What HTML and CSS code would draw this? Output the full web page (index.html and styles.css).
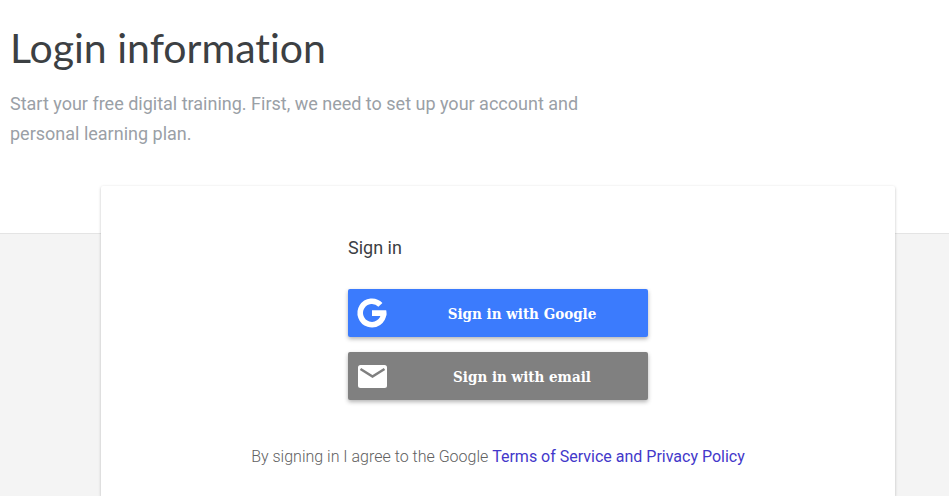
FILE: index.html
```html
<!DOCTYPE html>
<html lang="en">
<head>
    <meta charset="UTF-8">
    <meta name="viewport" content="width=device-width, initial-scale=1">
    <title>Login information</title>

    <link rel="stylesheet" href="styles.css">
</head>
<body>

<header class="intro">
    <h1 class="intro-title">Login information</h1>
    <p class="intro-text">Start your free digital training. First, we need to set up your account and personal learning plan.</p>
</header>

<main class="content">
    <section class="card">
        <div class="sign-in">
            <h2 class="sign-in-title">Sign in</h2>
            <button type="button" class="btn btn-google">
                <svg class="btn-icon" viewBox="0 0 48 48" aria-hidden="true">
                    <path fill="none" stroke="#fff" stroke-width="5.6" d="M32.400 15.900A11.700 11.700 0 1 0 35.600 24.600"/>
                    <path fill="#fff" d="M24 21.300h14.200c.2 1 .3 1.900.3 3l-.3 2.600H24z"/>
                </svg>
                <span class="btn-label">Sign in with Google</span>
            </button>
            <button type="button" class="btn btn-email">
                <svg class="btn-icon" viewBox="0 0 48 48" aria-hidden="true">
                    <rect x="10" y="13" width="29" height="23" rx="2.500" fill="#fff"/>
                    <path fill="none" stroke="#808080" stroke-width="2.600" d="M12.500 17l12 7.500 12-7.500"/>
                </svg>
                <span class="btn-label">Sign in with email</span>
            </button>
        </div>
        <p class="terms">By signing in I agree to the Google <a href="#terms">Terms of Service and Privacy Policy</a></p>
    </section>
</main>

</body>
</html>
```
FILE: styles.css
```css
* {
    box-sizing: border-box;
}

body {
    margin: 0;
    min-height: 100vh;
    display: flex;
    flex-direction: column;
    font-family: Roboto, sans-serif;
    background-color: #f4f4f4;
}

.intro {
    padding: 24px 10px 84px;
    background-color: #fff;
    border-bottom: 1px solid #e4e4e4;
}

.intro-title {
    margin: 0 0 17px;
    font-family: Lato, sans-serif;
    font-size: 41px;
    font-weight: 400;
    font-variant-ligatures: none;
    line-height: 48px;
    color: #3c4043;
}

.intro-text {
    max-width: 600px;
    margin: 0;
    font-size: 18px;
    line-height: 30px;
    color: #9aa0a6;
}

.content {
    flex: 1;
    display: flex;
    padding: 0 54px 0 101px;
}

.card {
    flex: 1;
    margin-top: -48px;
    padding: 48px 24px 24px;
    background-color: #fff;
    border-radius: 2px 2px 0 0;
    box-shadow: 0 1px 3px rgba(0, 0, 0, 0.25);
}

.sign-in {
    max-width: 300px;
    margin: 0 auto;
}

.sign-in-title {
    margin: 0 0 27px;
    font-size: 18px;
    font-weight: 400;
    line-height: 28px;
    color: #3c4043;
}

.btn {
    display: flex;
    align-items: center;
    width: 100%;
    height: 48px;
    margin-bottom: 15px;
    padding: 0;
    border: 0;
    border-radius: 2px;
    color: #fff;
    box-shadow: 0 2px 4px rgba(0, 0, 0, 0.3);
    cursor: pointer;
}

.btn-google {
    background-color: #3b7bfd;
}

.btn-email {
    background-color: #808080;
}

.btn-icon {
    width: 48px;
    height: 48px;
}

.btn-label {
    flex: 1;
    padding-top: 2px;
    font-family: "DejaVu Serif Condensed", "DejaVu Serif", serif;
    font-size: 15px;
    font-weight: 700;
    line-height: 20px;
}

.terms {
    margin: 45px 0 0;
    font-size: 16px;
    font-weight: 300;
    line-height: 24px;
    text-align: center;
    color: #616161;
}

.terms a {
    font-weight: 400;
    color: #4338ca;
    text-decoration: none;
}
```
